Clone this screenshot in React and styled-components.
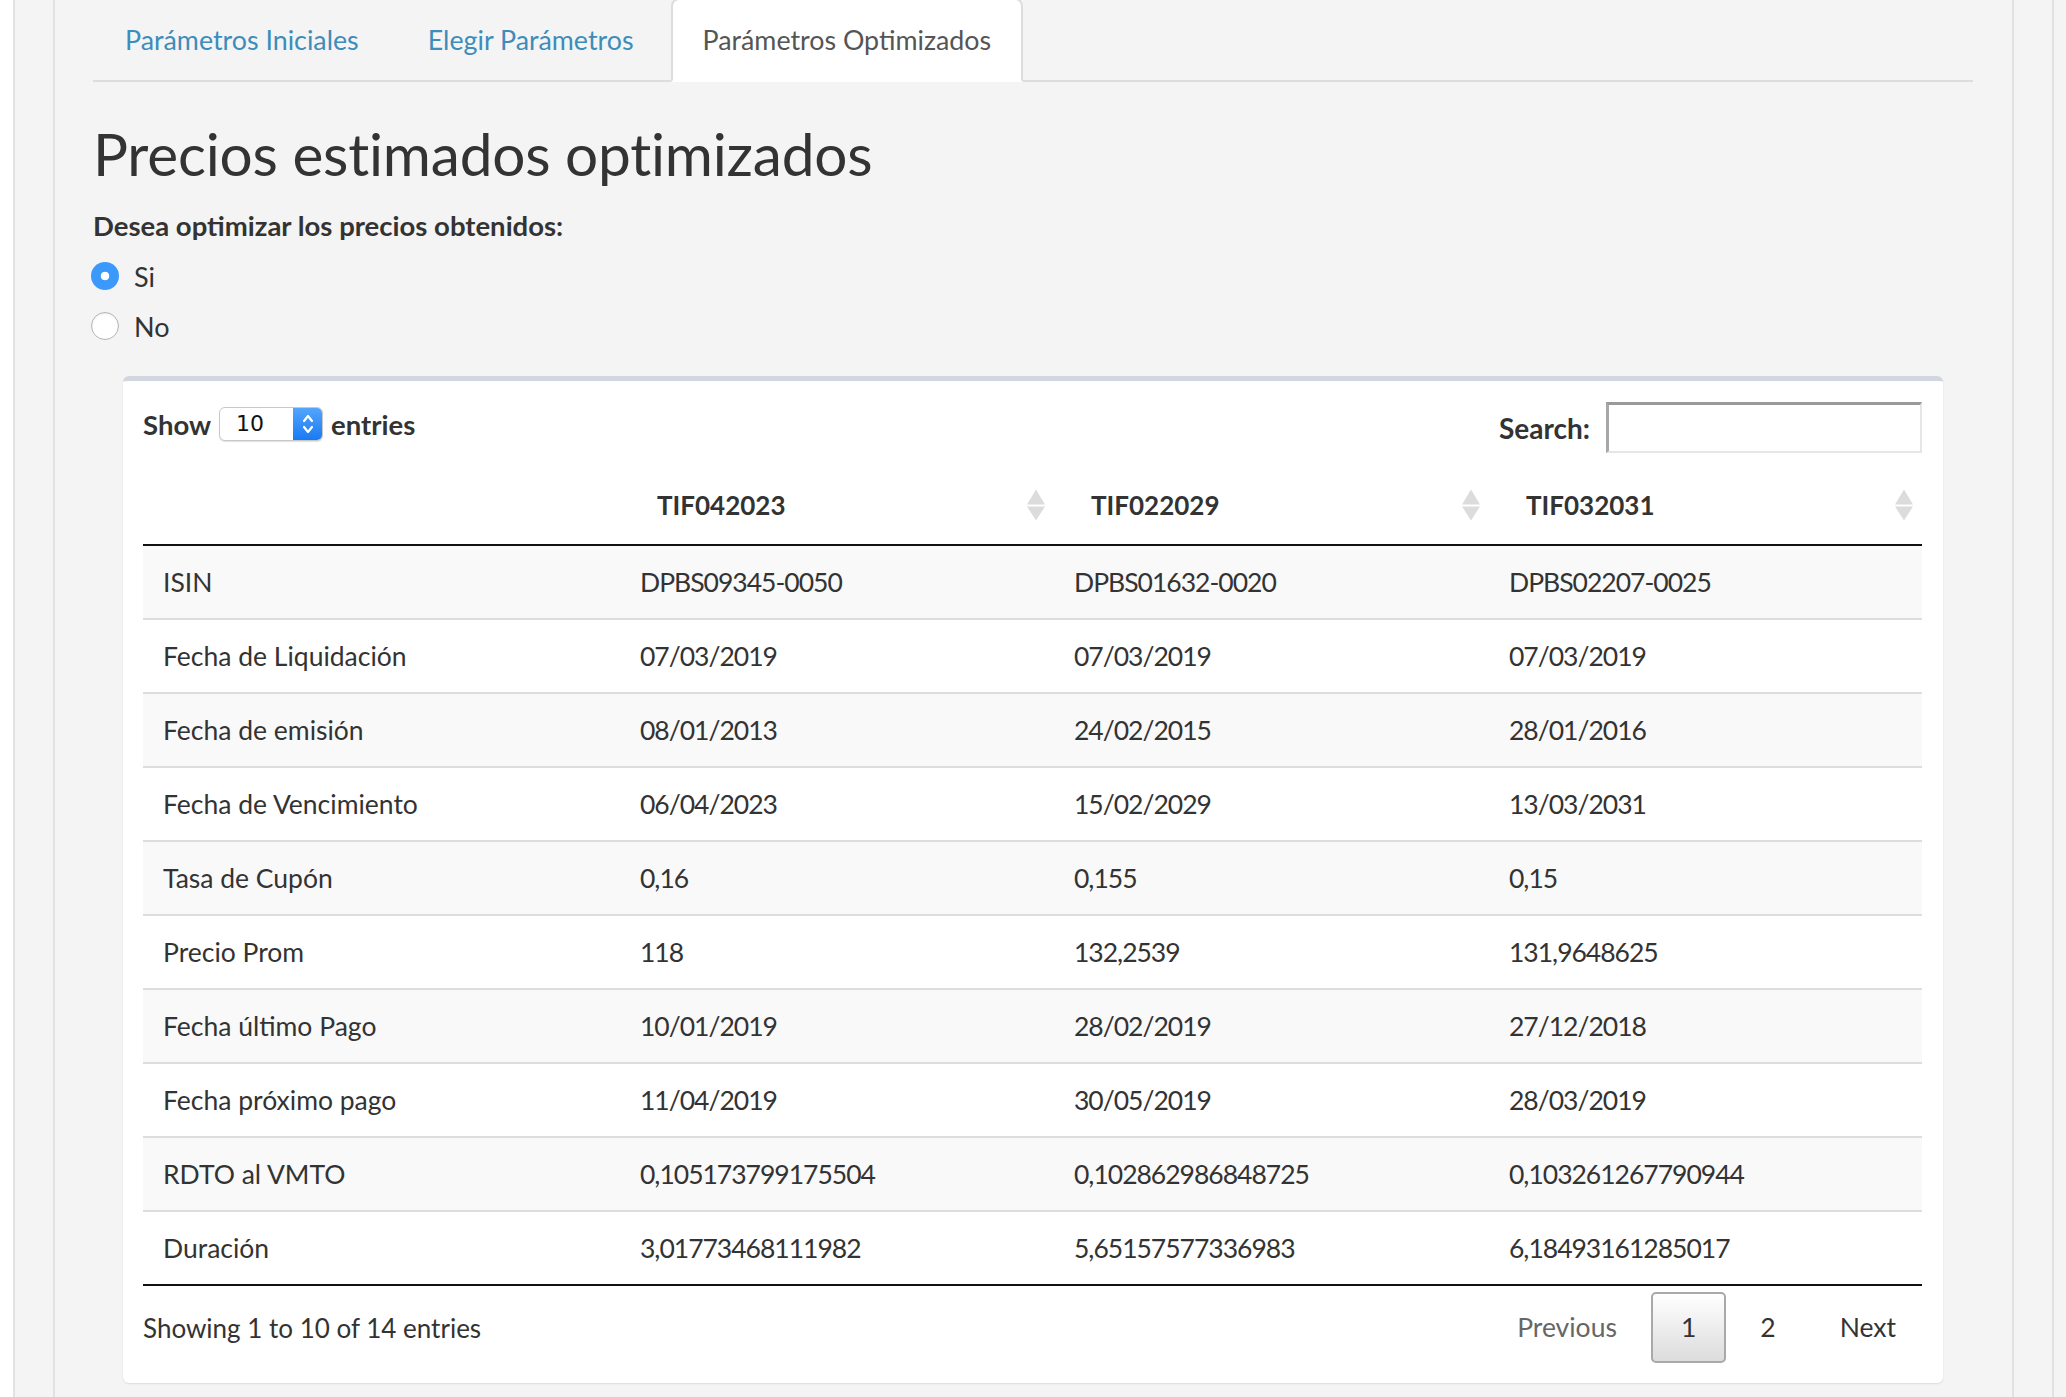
import React, { useState } from 'react';
import styled, { createGlobalStyle, css } from 'styled-components';

const GlobalStyle = createGlobalStyle`
	html, body {
		margin: 0;
		padding: 0;
		background: #fff;
	}
	body {
		font-family: Lato, 'Liberation Sans', sans-serif;
		color: #333;
		font-size: 26px;
	}
	* {
		box-sizing: border-box;
	}
`;

const TABS = ['Parámetros Iniciales', 'Elegir Parámetros', 'Parámetros Optimizados'];

const COLUMNS = ['TIF042023', 'TIF022029', 'TIF032031'];

const ROWS = [
	['ISIN', 'DPBS09345-0050', 'DPBS01632-0020', 'DPBS02207-0025'],
	['Fecha de Liquidación', '07/03/2019', '07/03/2019', '07/03/2019'],
	['Fecha de emisión', '08/01/2013', '24/02/2015', '28/01/2016'],
	['Fecha de Vencimiento', '06/04/2023', '15/02/2029', '13/03/2031'],
	['Tasa de Cupón', '0,16', '0,155', '0,15'],
	['Precio Prom', '118', '132,2539', '131,9648625'],
	['Fecha último Pago', '10/01/2019', '28/02/2019', '27/12/2018'],
	['Fecha próximo pago', '11/04/2019', '30/05/2019', '28/03/2019'],
	['RDTO al VMTO', '0,105173799175504', '0,102862986848725', '0,103261267790944'],
	['Duración', '3,01773468111982', '5,65157577336983', '6,18493161285017'],
];

const SortIcon = () => (
	<svg width="18" height="31" viewBox="0 0 18 31">
		<path d="M9 0 L18 15 L0 15 Z" fill="#dcdcdc" />
		<path d="M0 17 L18 17 L9 31 Z" fill="#dcdcdc" />
	</svg>
);

const Chevrons = () => (
	<svg width="14" height="24" viewBox="0 0 14 24">
		<path d="M3 9 L7 4 L11 9" fill="none" stroke="#fff" strokeWidth="2.2" strokeLinecap="round" strokeLinejoin="round" />
		<path d="M3 15 L7 20 L11 15" fill="none" stroke="#fff" strokeWidth="2.2" strokeLinecap="round" strokeLinejoin="round" />
	</svg>
);

const App = () => {
	const [optimize, setOptimize] = useState('si');

	return (
		<>
			<GlobalStyle />
			<Page>
				<OuterFrame>
					<InnerFrame>
						<TabBar>
							{TABS.map((tab, i) => (
								<Tab key={tab} active={i === 2}>
									{tab}
								</Tab>
							))}
						</TabBar>

						<Title>Precios estimados optimizados</Title>
						<FieldLabel>Desea optimizar los precios obtenidos:</FieldLabel>
						<RadioGroup>
							<RadioOption onClick={() => setOptimize('si')}>
								<RadioDot checked={optimize === 'si'} />
								Si
							</RadioOption>
							<RadioOption onClick={() => setOptimize('no')}>
								<RadioDot checked={optimize === 'no'} />
								No
							</RadioOption>
						</RadioGroup>

						<Box>
							<Controls>
								<LengthControl>
									Show
									<Select>
										<SelectValue>10</SelectValue>
										<SelectArrow>
											<Chevrons />
										</SelectArrow>
									</Select>
									entries
								</LengthControl>
								<SearchControl>
									Search:
									<SearchInput type="text" />
								</SearchControl>
							</Controls>

							<Table>
								<colgroup>
									<col style={{ width: 477 }} />
									<col style={{ width: 434 }} />
									<col style={{ width: 435 }} />
									<col style={{ width: 433 }} />
								</colgroup>
								<thead>
									<tr>
										<HeadCell />
										{COLUMNS.map(col => (
											<HeadCell key={col}>
												{col}
												<SortWrap>
													<SortIcon />
												</SortWrap>
											</HeadCell>
										))}
									</tr>
								</thead>
								<tbody>
									{ROWS.map((row, i) => (
										<BodyRow key={row[0]} striped={i % 2 === 0} first={i === 0}>
											{row.map((cell, j) => (
												<Cell key={j} value={j > 0}>
													{cell}
												</Cell>
											))}
										</BodyRow>
									))}
								</tbody>
							</Table>

							<Footer>
								<Info>Showing 1 to 10 of 14 entries</Info>
								<Pagination>
									<PageButton disabled>Previous</PageButton>
									<PageButton current>1</PageButton>
									<PageButton>2</PageButton>
									<PageButton>Next</PageButton>
								</Pagination>
							</Footer>
						</Box>
					</InnerFrame>
				</OuterFrame>
			</Page>
		</>
	);
};

const Page = styled.div`
	padding: 0 12px 0 13px;
	background: linear-gradient(to right, #fff 13px, #f4f4f4 13px);
	overflow: hidden;
`;

const OuterFrame = styled.div`
	background: #f4f4f4;
	border-left: 2px solid #e2e2e2;
	border-right: 2px solid #e2e2e2;
	padding: 0 38px;
`;

const InnerFrame = styled.div`
	min-height: 100vh;
	background: #f4f4f4;
	border-left: 2px solid #e2e2e2;
	border-right: 2px solid #e2e2e2;
	padding: 0 39px 12px 38px;
`;

const TabBar = styled.div`
	display: flex;
	height: 82px;
	border-bottom: 2px solid #ddd;
`;

const Tab = styled.div`
	height: 82px;
	line-height: 80px;
	padding: 0 30px;
	margin-right: 5px;
	font-size: 26.8px;
	color: #3c8dbc;
	border: 2px solid transparent;
	border-radius: 8px 8px 0 0;
	margin-top: -2px;
	cursor: pointer;
	${props =>
		props.active &&
		css`
			background: #fff;
			color: #555;
			border-color: #ddd;
			border-bottom-color: #fff;
			height: 84px;
		`}
`;

const Title = styled.h2`
	margin: 41px 0 0;
	font-size: 58.5px;
	font-weight: 400;
	line-height: 60px;
	color: #333;
	letter-spacing: -0.2px;
`;

const FieldLabel = styled.div`
	margin-top: 23px;
	font-weight: 700;
	font-size: 27.5px;
	line-height: 40px;
`;

const RadioGroup = styled.div`
	margin-top: 5px;
`;

const RadioOption = styled.label`
	display: flex;
	align-items: center;
	gap: 15px;
	height: 50px;
	margin-left: -2px;
	font-size: 27px;
	cursor: pointer;
`;

const RadioDot = styled.span`
	width: 28px;
	height: 28px;
	border-radius: 50%;
	flex-shrink: 0;
	${props =>
		props.checked
			? css`
					background: radial-gradient(circle, #fff 0 4px, #3b99fc 4.6px);
			  `
			: css`
					background: #fff;
					border: 1.5px solid #b4b4b4;
					box-shadow: inset 0 1px 2px rgba(0, 0, 0, 0.08);
			  `}
`;

const Box = styled.div`
	margin: 25px 30px 0;
	background: #fff;
	border-top: 5px solid #d2d6de;
	border-radius: 6px;
	box-shadow: 0 1px 2px rgba(0, 0, 0, 0.1);
	padding: 21px 21px 20px 20px;
`;

const Controls = styled.div`
	display: flex;
	justify-content: space-between;
	align-items: flex-start;
`;

const LengthControl = styled.div`
	display: flex;
	align-items: center;
	gap: 8px;
	margin-top: 5px;
	font-weight: 700;
	font-size: 27.5px;
`;

const Select = styled.div`
	display: flex;
	width: 104px;
	height: 34px;
	border: 1px solid #c8c8c8;
	border-radius: 6px;
	overflow: hidden;
	background: #fff;
	box-shadow: 0 1px 1px rgba(0, 0, 0, 0.12);
	font-weight: 400;
`;

const SelectValue = styled.span`
	flex: 1;
	padding-left: 16px;
	font-family: 'DejaVu Sans', sans-serif;
	font-size: 22px;
	line-height: 32px;
	color: #111;
`;

const SelectArrow = styled.span`
	width: 29px;
	display: flex;
	align-items: center;
	justify-content: center;
	background: linear-gradient(#54a5fb, #1a7af4);
`;

const SearchControl = styled.label`
	display: flex;
	align-items: center;
	gap: 16px;
	font-weight: 700;
	font-size: 28px;
`;

const SearchInput = styled.input`
	width: 316px;
	height: 51px;
	border-style: solid;
	border-width: 3px 2px 2px 3px;
	border-color: #9a9a9a #e6e6e6 #e6e6e6 #a8a8a8;
	background: #fff;
	outline: none;
`;

const Table = styled.table`
	width: 100%;
	margin-top: 12px;
	border-collapse: collapse;
	table-layout: fixed;
	font-size: 26.5px;
`;

const HeadCell = styled.th`
	position: relative;
	height: 80px;
	padding: 0 30px 0 37px;
	text-align: left;
	font-weight: 700;
	font-size: 26px;
	border-bottom: 2px solid #111;
`;

const SortWrap = styled.span`
	position: absolute;
	right: 9px;
	top: 50%;
	transform: translateY(-50%);
	display: flex;
`;

const BodyRow = styled.tr`
	background: ${props => (props.striped ? '#f9f9f9' : '#fff')};
	border-top: ${props => (props.first ? 'none' : '2px solid #ddd')};
	&:last-child {
		border-bottom: 2px solid #111;
	}
`;

const Cell = styled.td`
	height: 74px;
	padding: 0 20px;
	white-space: nowrap;
	overflow: hidden;
	letter-spacing: ${props => (props.value ? '-1px' : '0')};
`;

const Footer = styled.div`
	display: flex;
	justify-content: space-between;
	align-items: center;
	margin-top: 6px;
`;

const Info = styled.div`
	font-size: 26px;
`;

const Pagination = styled.div`
	display: flex;
	gap: 4px;
	margin-right: -4px;
`;

const PageButton = styled.span`
	height: 71px;
	line-height: 67px;
	padding: 0 28px;
	border: 2px solid transparent;
	border-radius: 5px;
	font-size: 26.5px;
	color: ${props => (props.disabled ? '#666' : '#333')};
	cursor: pointer;
	${props =>
		props.current &&
		css`
			border-color: #a9a9a9;
			background: linear-gradient(#fff, #dcdcdc);
		`}
`;

export default App;
